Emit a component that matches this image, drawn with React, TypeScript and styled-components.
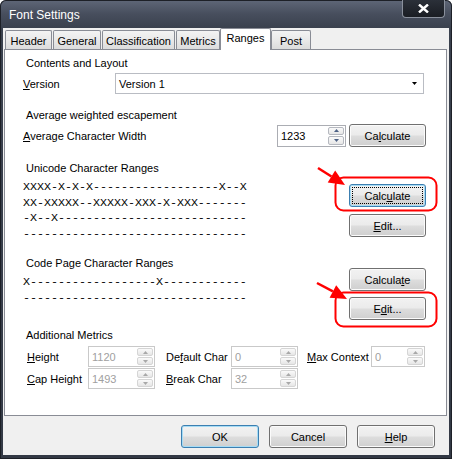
import React from "react";
import styled, { createGlobalStyle, css } from "styled-components";

const GlobalStyle = createGlobalStyle`
  html, body {
    margin: 0;
    padding: 0;
    background: #ffffff;
  }
  body {
    font-family: "Liberation Sans", Arial, sans-serif;
    font-size: 11px;
    color: #000;
  }
`;

const Window = styled.div`
  position: relative;
  width: 452px;
  height: 459px;
  display: flex;
  flex-direction: column;
  background: linear-gradient(#5f6778 0px, #474e5d 14px, #3a414e 28px, #333945 100%);
  border-radius: 6px 6px 0 0;
  box-shadow: inset 0 0 0 1px #1d2027;
  overflow: hidden;
`;

const TitleBar = styled.div`
  height: 28px;
  flex: none;
  display: flex;
  align-items: flex-start;
  padding-left: 9px;
`;

const Title = styled.div`
  margin-top: 8px;
  color: #ffffff;
  font-size: 12px;
  line-height: 14px;
`;

const CloseButton = styled.div`
  margin-left: auto;
  margin-right: 7px;
  width: 43px;
  height: 18px;
  box-sizing: border-box;
  border: 1px solid #8a909c;
  border-top: none;
  border-radius: 0 0 4px 4px;
  background: linear-gradient(#2b3039, #1a1d23);
  display: flex;
  align-items: center;
  justify-content: center;
`;

const Client = styled.div`
  flex: 1;
  display: flex;
  flex-direction: column;
  margin: 0 3px 4px 3px;
  background: #f0f0f0;
`;

const TabStrip = styled.div`
  height: 21px;
  flex: none;
  display: flex;
  align-items: flex-end;
  padding-left: 2px;
`;

const Tab = styled.div<{ $w: number; $active?: boolean }>`
  width: ${(p) => p.$w}px;
  box-sizing: border-box;
  height: 19px;
  margin-right: 1px;
  border: 1px solid #898c95;
  border-bottom: none;
  border-radius: 2px 2px 0 0;
  background: linear-gradient(#f3f3f3, #e9e9e9 50%, #dcdcdc);
  display: flex;
  align-items: center;
  justify-content: center;
  padding-top: 1px;
  font-size: 11px;
  ${(p) =>
    p.$active &&
    css`
      height: 22px;
      margin: 0 0 -1px -1px;
      background: #ffffff;
      padding: 0 0 3px 0;
      position: relative;
      z-index: 1;
    `}
`;

const Panel = styled.div`
  height: 367px;
  box-sizing: border-box;
  flex: none;
  margin: 0 2px 0 1px;
  border: 1px solid #898c95;
  background: #ffffff;
  padding: 6px 20px 0 18px;
  display: flex;
  flex-direction: column;
`;

const GroupTitle = styled.div<{ $mt?: number }>`
  margin: ${(p) => p.$mt ?? 0}px 0 0 3px;
  line-height: 14px;
`;

const Row = styled.div<{ $mt: number }>`
  margin-top: ${(p) => p.$mt}px;
  display: flex;
  align-items: center;
  justify-content: space-between;
`;

const Label = styled.span`
  line-height: 14px;
  white-space: nowrap;
`;

const Select = styled.div`
  width: 309px;
  height: 21px;
  box-sizing: border-box;
  margin-right: 2px;
  border: 1px solid #b9bcc3;
  background: #ffffff;
  display: flex;
  align-items: center;
  padding: 0 6px 0 3px;
  justify-content: space-between;
`;

const RightGroup = styled.div`
  display: flex;
  align-items: center;
  gap: 3px;
`;

const Spin = styled.div<{ $w: number; $h: number; $disabled?: boolean }>`
  width: ${(p) => p.$w}px;
  height: ${(p) => p.$h}px;
  box-sizing: border-box;
  border: 1px solid ${(p) => (p.$disabled ? "#c9c9c9" : "#abadb3")};
  background: #ffffff;
  display: flex;
  align-items: stretch;
  color: ${(p) => (p.$disabled ? "#a0a0a0" : "#000000")};
`;

const SpinValue = styled.div`
  flex: 1;
  display: flex;
  align-items: center;
  padding-left: 3px;
  line-height: 14px;
`;

const SpinArrows = styled.div`
  width: 16px;
  display: flex;
  flex-direction: column;
  padding: 1px 1px 1px 0;
  gap: 1px;
`;

const SpinPart = styled.div<{ $disabled?: boolean }>`
  flex: 1;
  border: 1px solid ${(p) => (p.$disabled ? "#d5d5d5" : "#b5b8bf")};
  border-radius: 2px;
  background: linear-gradient(#fafafa, #e6e6e6);
  display: flex;
  align-items: center;
  justify-content: center;
`;

const Button = styled.div<{ $w?: number; $focus?: boolean; $dotted?: boolean }>`
  position: relative;
  width: ${(p) => p.$w ?? 77}px;
  height: 23px;
  box-sizing: border-box;
  border: 1px solid ${(p) => (p.$focus ? "#3c7fb1" : "#707070")};
  border-radius: 3px;
  background: linear-gradient(#f2f2f2 0%, #ebebeb 48%, #dddddd 52%, #cfcfcf 100%);
  box-shadow: inset 0 0 0 1px ${(p) => (p.$focus ? "#a6dcf5" : "#fbfbfb")};
  display: flex;
  align-items: center;
  justify-content: center;
  font-size: 11px;
  line-height: 14px;
  ${(p) =>
    p.$dotted &&
    css`
      &::after {
        content: "";
        position: absolute;
        inset: 2px;
        border: 1px dotted #000000;
      }
    `}
`;

const Section = styled.div<{ $mt: number }>`
  margin-top: ${(p) => p.$mt}px;
  display: flex;
  justify-content: space-between;
  align-items: flex-start;
`;

const RangeText = styled.div`
  margin-top: 5px;
  font-family: "Liberation Mono", "Courier New", monospace;
  font-size: 11.67px;
  line-height: 15.5px;
  white-space: pre;
`;

const ButtonColumn = styled.div<{ $pt: number; $gap: number }>`
  padding-top: ${(p) => p.$pt}px;
  display: flex;
  flex-direction: column;
  gap: ${(p) => p.$gap}px;
`;

const MetricsGrid = styled.div`
  margin-top: 4px;
  padding-left: 4px;
  display: grid;
  grid-template-columns: 61px 67px 76px 67px 73px 54px;
  grid-auto-rows: 21px;
  row-gap: 1px;
  align-items: center;
`;

const MetricLabel = styled.span<{ $indent?: number }>`
  padding-left: ${(p) => p.$indent ?? 0}px;
  line-height: 14px;
  white-space: nowrap;
`;

const Footer = styled.div`
  flex: 1;
  display: flex;
  justify-content: flex-end;
  align-items: flex-start;
  padding: 9px 14px 0 0;
  gap: 10px;
`;

const Overlay = styled.svg`
  position: absolute;
  left: 0;
  top: 0;
  pointer-events: none;
`;

const UpArrow = ({ color }: { color: string }) => (
  <svg width="5" height="3" viewBox="0 0 5 3">
    <path d="M0 3 L2.5 0 L5 3 Z" fill={color} />
  </svg>
);

const DownArrow = ({ color }: { color: string }) => (
  <svg width="5" height="3" viewBox="0 0 5 3">
    <path d="M0 0 L5 0 L2.5 3 Z" fill={color} />
  </svg>
);

const SpinBox = ({
  value,
  w,
  h,
  disabled,
}: {
  value: string;
  w: number;
  h: number;
  disabled?: boolean;
}) => {
  const c = disabled ? "#a8a8a8" : "#4d6185";
  return (
    <Spin $w={w} $h={h} $disabled={disabled}>
      <SpinValue>{value}</SpinValue>
      <SpinArrows>
        <SpinPart $disabled={disabled}>
          <UpArrow color={c} />
        </SpinPart>
        <SpinPart $disabled={disabled}>
          <DownArrow color={c} />
        </SpinPart>
      </SpinArrows>
    </Spin>
  );
};

const RedArrow = ({ x1, y1, x2, y2 }: { x1: number; y1: number; x2: number; y2: number }) => {
  const dx = x2 - x1;
  const dy = y2 - y1;
  const len = Math.sqrt(dx * dx + dy * dy);
  const ux = dx / len;
  const uy = dy / len;
  const bx = x2 - ux * 16;
  const by = y2 - uy * 16;
  const px = -uy * 7;
  const py = ux * 7;
  return (
    <g>
      <line x1={x1} y1={y1} x2={bx} y2={by} stroke="#ff0000" strokeWidth="2.5" />
      <polygon
        points={`${x2},${y2} ${bx + px},${by + py} ${bx - px},${by - py}`}
        fill="#ff0000"
      />
    </g>
  );
};

const unicodeRanges = [
  "XXXX-X-X-X------------------X--X",
  "XX-XXXXX--XXXXX-XXX-X-XXX-------",
  "-X--X---------------------------",
  "--------------------------------",
];

const codePageRanges = [
  "X------------------X------------",
  "--------------------------------",
];

export default function App() {
  return (
    <>
      <GlobalStyle />
      <Window>
        <TitleBar>
          <Title>Font Settings</Title>
          <CloseButton>
            <svg width="11" height="9" viewBox="0 0 11 9">
              <path d="M1 0.5 L10 8.5 M10 0.5 L1 8.5" stroke="#ffffff" strokeWidth="2.4" />
            </svg>
          </CloseButton>
        </TitleBar>
        <Client>
          <TabStrip>
            <Tab $w={47}>Header</Tab>
            <Tab $w={48}>General</Tab>
            <Tab $w={73}>Classification</Tab>
            <Tab $w={44}>Metrics</Tab>
            <Tab $w={51} $active>
              Ranges
            </Tab>
            <Tab $w={40}>Post</Tab>
          </TabStrip>
          <Panel>
            <GroupTitle>Contents and Layout</GroupTitle>
            <Row $mt={3}>
              <Label>
                <u>V</u>ersion
              </Label>
              <Select>
                <span>Version 1</span>
                <DownArrow color="#000000" />
              </Select>
            </Row>

            <GroupTitle $mt={14}>Average weighted escapement</GroupTitle>
            <Row $mt={2}>
              <Label>
                <u>A</u>verage Character Width
              </Label>
              <RightGroup>
                <SpinBox value="1233" w={69} h={22} />
                <Button>
                  Ca<u>l</u>culate
                </Button>
              </RightGroup>
            </Row>

            <Section $mt={14}>
              <div>
                <GroupTitle>Unicode Character Ranges</GroupTitle>
                <RangeText>{unicodeRanges.join("\n")}</RangeText>
              </div>
              <ButtonColumn $pt={23} $gap={7}>
                <Button $focus $dotted>
                  Calc<u>u</u>late
                </Button>
                <Button>
                  <u>E</u>dit...
                </Button>
              </ButtonColumn>
            </Section>

            <Section $mt={14}>
              <div>
                <GroupTitle>Code Page Character Ranges</GroupTitle>
                <RangeText>{codePageRanges.join("\n")}</RangeText>
              </div>
              <ButtonColumn $pt={12} $gap={6}>
                <Button>
                  Calcula<u>t</u>e
                </Button>
                <Button>
                  E<u>d</u>it...
                </Button>
              </ButtonColumn>
            </Section>

            <GroupTitle $mt={8}>Additional Metrics</GroupTitle>
            <MetricsGrid>
              <MetricLabel>
                <u>H</u>eight
              </MetricLabel>
              <SpinBox value="1120" w={67} h={21} disabled />
              <MetricLabel $indent={11}>
                De<u>f</u>ault Char
              </MetricLabel>
              <SpinBox value="0" w={67} h={21} disabled />
              <MetricLabel $indent={9}>
                <u>M</u>ax Context
              </MetricLabel>
              <SpinBox value="0" w={54} h={21} disabled />
              <MetricLabel>
                <u>C</u>ap Height
              </MetricLabel>
              <SpinBox value="1493" w={67} h={21} disabled />
              <MetricLabel $indent={11}>
                <u>B</u>reak Char
              </MetricLabel>
              <SpinBox value="32" w={67} h={21} disabled />
            </MetricsGrid>
          </Panel>
          <Footer>
            <Button $w={78} $focus>
              OK
            </Button>
            <Button $w={78}>Cancel</Button>
            <Button $w={78}>
              <u>H</u>elp
            </Button>
          </Footer>
        </Client>
        <Overlay width="452" height="459" viewBox="0 0 452 459">
          <rect x="335.5" y="177.5" width="101" height="33" rx="8" fill="none" stroke="#ff0000" strokeWidth="2" />
          <rect x="335.5" y="292.5" width="101" height="34" rx="8" fill="none" stroke="#ff0000" strokeWidth="2" />
          <RedArrow x1={318} y1={168} x2={345} y2={185} />
          <RedArrow x1={317} y1={283} x2={347} y2={299} />
        </Overlay>
      </Window>
    </>
  );
}
